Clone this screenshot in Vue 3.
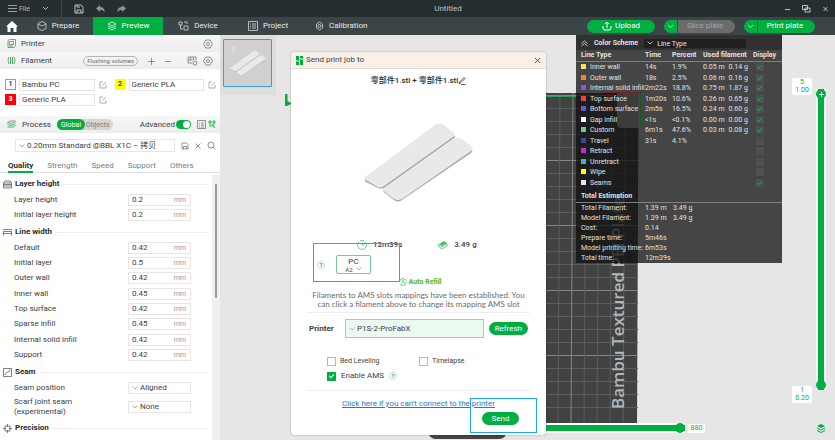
<template>
  <div class="app">
    <header class="titlebar">
      <button class="bar-button file-button">
        <svg width="9" height="9" viewBox="0 0 9 9"><path d="M0 1.500h9M0 4.500h9M0 7.500h9" /></svg>
        File
      </button>
      <button class="bar-button chevron-button" aria-label="More">
        <svg width="7" height="5" viewBox="0 0 7 5"><path d="M1 1l2.500 2.500L6 1" /></svg>
      </button>
      <span class="bar-divider"></span>
      <button class="bar-button" aria-label="Save">
        <svg width="10" height="10" viewBox="0 0 10 10"><path d="M1 1h6l2 2v6H1zM3 9V6h4v3M3 1v2h3" /></svg>
      </button>
      <button class="bar-button muted" aria-label="Undo">
        <svg width="9" height="8" viewBox="0 0 9 8"><path class="solid" d="M4 0v2c3 0 5 2 4.500 5C7.500 5.500 6 5 4 5v2L0 3.500z" /></svg>
      </button>
      <button class="bar-button muted" aria-label="Redo">
        <svg width="9" height="8" viewBox="0 0 9 8"><path class="solid" d="M5 0v2C2 2 0 4 .5 7 1.500 5.500 3 5 5 5v2l4-3.500z" /></svg>
      </button>
      <span class="doc-title">Untitled</span>
      <div class="window-buttons">
        <button class="bar-button" aria-label="Minimize">
          <svg width="7" height="8" viewBox="0 0 7 8"><path d="M1 4.500h5" /></svg>
        </button>
        <button class="bar-button" aria-label="Restore">
          <svg width="9" height="8" viewBox="0 0 9 8"><path d="M.5 .5h5v4h-5zM3 3h5v4H3z" /></svg>
        </button>
        <button class="bar-button" aria-label="Close">
          <svg width="7" height="8" viewBox="0 0 7 8"><path d="M1.500 2l4 4M5.500 2l-4 4" /></svg>
        </button>
      </div>
    </header>

    <nav class="navbar">
      <button class="home" aria-label="Home">
        <svg width="12" height="11" viewBox="0 0 12 11"><path d="M6 0l6 5.500h-1.500V11h-3V7h-3v4h-3V5.500H0z" /></svg>
      </button>
      <button class="nav-tab">
        <svg width="10" height="10" viewBox="0 0 10 10"><path d="M5 .5l4 2v5l-4 2-4-2v-5zM1 3l4 2 4-2" /></svg>
        Prepare
      </button>
      <button class="nav-tab active">
        <svg width="10" height="10" viewBox="0 0 10 10"><path d="M5 1l4 2-4 2-4-2zM1 5l4 2 4-2M1 7l4 2 4-2" /></svg>
        Preview
      </button>
      <button class="nav-tab">
        <svg width="11" height="10" viewBox="0 0 11 10"><path d="M1 1h3v3H1zM2.500 4v4H5M6 5h4v4H6zM6 1h3v2" /></svg>
        Device
      </button>
      <button class="nav-tab">
        <svg width="10" height="10" viewBox="0 0 10 10"><path d="M.5 .5h9v9h-9zM2 3h1M4 3h4M2 5h1M4 5h4M2 7h1M4 7h4" /></svg>
        Project
      </button>
      <button class="nav-tab">
        <svg width="9" height="10" viewBox="0 0 9 10"><path d="M4.500 1l3 2v4l-3 2-3-2V3z" /><circle cx="4.500" cy="5" r="1.500" /></svg>
        Calibration
      </button>
      <div class="nav-actions">
        <button class="pill upload">
          <svg width="10" height="10" viewBox="0 0 10 10"><path d="M5 7V1M3 3l2-2 2 2M1 5v2q0 2 2 2h4q2 0 2-2V5" /></svg>
          Upload
        </button>
        <div class="split">
          <button class="split-arrow" aria-label="Slice options">
            <svg width="7" height="5" viewBox="0 0 7 5"><path d="M1 1l2.500 2.500L6 1" /></svg>
          </button>
          <button class="split-main" disabled>Slice plate</button>
        </div>
        <div class="split">
          <button class="split-arrow" aria-label="Print options">
            <svg width="7" height="5" viewBox="0 0 7 5"><path d="M1 1l2.500 2.500L6 1" /></svg>
          </button>
          <button class="split-main">Print plate</button>
        </div>
      </div>
    </nav>

    <div class="main">
      <aside class="sidebar">
        <div class="panel-bar">
          <svg class="line-icon" width="9" height="9" viewBox="0 0 9 9"><path d="M1 1.500L2.500 .5h6v6L7 8.500H1zM2.500 2.500h4v3h-4z" /><path class="green" d="M2 7h4" /></svg>
          <span class="grow">Printer</span>
          <button class="icon-button" aria-label="Printer settings">
            <svg width="10" height="10" viewBox="0 0 10 10"><path d="M3 1h4l2.500 4L7 9H3L.5 5z" /><circle cx="5" cy="5" r="1.500" /></svg>
          </button>
        </div>
        <div class="panel-bar">
          <svg class="line-icon" width="9" height="9" viewBox="0 0 9 9"><path d="M2 1Q0 4.500 2 8M7 1q2 3.500 0 7" /><path class="green" d="M3.500 1v7M5.500 1v7" /></svg>
          <span class="grow">Filament</span>
          <button class="flushing">Flushing volumes</button>
          <button class="icon-button plus" aria-label="Add filament">
            <svg width="8" height="8" viewBox="0 0 8 8"><path d="M1 4.500h7M4.500 1v7" /></svg>
          </button>
          <button class="icon-button minus" aria-label="Remove filament">
            <svg width="8" height="8" viewBox="0 0 8 8"><path d="M1 4.500h6" /></svg>
          </button>
          <button class="icon-button" aria-label="Sync filaments">
            <svg width="11" height="10" viewBox="0 0 11 10"><path d="M1 1h8v3M1 1v6h4M1 4h5M3.500 1v3M6.500 1v3" /><circle cx="8" cy="7" r="2" /></svg>
          </button>
          <button class="icon-button" aria-label="Filament settings">
            <svg width="10" height="10" viewBox="0 0 10 10"><path d="M3 1h4l2.500 4L7 9H3L.5 5z" /><circle cx="5" cy="5" r="1.500" /></svg>
          </button>
        </div>

        <div class="filaments">
          <div v-for="f in filaments" :key="f.id" class="filament">
            <span class="swatch" :class="f.tone">{{ f.id }}</span>
            <input v-model="f.name" class="filament-name" :aria-label="'Filament ' + f.id" />
            <button class="icon-button edit" :aria-label="'Edit filament ' + f.id">
              <svg width="8" height="8" viewBox="0 0 8 8"><path d="M4 1H1v6h6V4M3.500 4.500L7 1" /></svg>
            </button>
          </div>
        </div>

        <div class="panel-bar process">
          <svg class="line-icon" width="9" height="9" viewBox="0 0 9 9"><path d="M2.500 1h6L6.500 3h-6z" /><path class="green" d="M.5 5h6l2-2M.5 7h6l2-2" /></svg>
          <span>Process</span>
          <div class="scope">
            <button class="on">Global</button>
            <button>Objects</button>
          </div>
          <label class="advanced">
            Advanced
            <input v-model="advanced" type="checkbox" class="toggle" />
          </label>
          <button class="icon-button" aria-label="Parameter list">
            <svg width="9" height="9" viewBox="0 0 9 9"><path d="M.5 .5h8v8h-8zM2 3h1M4 3h3M2 5h1M4 5h3M2 7h1M4 7h3" /></svg>
          </button>
          <button class="icon-button compare" aria-label="Compare presets">
            <svg width="8" height="9" viewBox="0 0 8 9"><path class="green" d="M1 1h2v2H1zM5 1h2v2H5zM2 3v3h4M4 4l3 4M6 3v2" /></svg>
          </button>
        </div>

        <div class="preset">
          <div class="select-box preset-select">
            <svg class="chevron" width="6" height="4" viewBox="0 0 6 4"><path d="M.5 .5L3 3 5.500 .5" /></svg>
            <select aria-label="Process preset"><option>0.20mm Standard @BBL X1C – 拷贝</option></select>
          </div>
          <button class="icon-button" aria-label="Save preset">
            <svg width="8" height="8" viewBox="0 0 8 8"><path d="M1 1h4.500L7 2.500V7H1zM2.500 7V4.500h3V7" /></svg>
          </button>
          <button class="icon-button" aria-label="Delete preset">
            <svg width="8" height="8" viewBox="0 0 8 8"><path d="M1.500 1.500l5 5M6.500 1.500l-5 5" /></svg>
          </button>
          <button class="icon-button" aria-label="Search">
            <svg width="9" height="9" viewBox="0 0 9 9"><circle cx="4" cy="4" r="3" /><path d="M6 6l2.500 2.500" /></svg>
          </button>
        </div>

        <div class="tabs">
          <button v-for="t in tabs" :key="t" :class="{ current: t === currentTab }" @click="currentTab = t">{{ t }}</button>
        </div>

        <div class="settings">
          <div class="settings-list">
            <section v-for="s in sections" :key="s.title">
              <h3>
                <svg class="section-icon" width="9" height="9" viewBox="0 0 9 9"><path :d="s.icon" /></svg>
                {{ s.title }}
              </h3>
              <label v-for="r in s.rows" :key="r.label" class="setting">
                <span class="setting-label">{{ r.label }}</span>
                <span v-if="r.options" class="select-box">
                  <svg class="chevron" width="6" height="4" viewBox="0 0 6 4"><path d="M.5 .5L3 3 5.500 .5" /></svg>
                  <select><option v-for="o in r.options" :key="o">{{ o }}</option></select>
                </span>
                <span v-else class="number-box">
                  <input v-model="r.value" type="text" />
                  <span class="unit">mm</span>
                </span>
              </label>
            </section>
          </div>
          <div class="scrollbar"><span></span></div>
        </div>
      </aside>

      <div class="canvas">
        <svg class="plate" width="93" height="330" viewBox="0 0 93 330">
          <path class="plate-body" d="M0 0h92.500L91 330H0z" />
          <path
            v-for="y in plateRows"
            :key="'r' + y"
            class="plate-line"
            :class="{ strong: (y - 2) % 65 === 0 }"
            :d="`M0 ${y}.5H92`"
          />
          <path
            v-for="x in plateCols"
            :key="'c' + x"
            class="plate-line"
            :class="{ strong: x === 26 }"
            :d="`M${x + 1} 0L${x - 1} 330`"
          />
          <path class="axis-green" d="M0 3.500h30" />
          <text class="plate-text" transform="translate(78 316) rotate(-90)">Bambu Textured PEI Plate</text>
        </svg>
        <svg class="origin" width="6" height="12" viewBox="0 0 6 12"><path d="M0 0h2.500v7L6 9v1l-4 2H0z" /></svg>
        <span class="plate-handle"></span>

        <div class="thumbs">
          <button class="thumb" aria-label="Plate 1">
            <span>1</span>
            <svg width="36" height="27" viewBox="0 0 110 80"><use href="#plates" /></svg>
          </button>
        </div>

        <div class="legend">
          <svg class="legend-axes" width="44" height="48" viewBox="0 0 44 48">
            <path class="area" d="M14 4h24v35H18q-4 0-4-4z" />
            <path class="red" d="M0 3.500h37" />
            <path class="lime" d="M37.500 3v36" />
            <path class="blue" d="M37 4l4-4" />
          </svg>
          <div class="legend-head">
            <svg width="7" height="7" viewBox="0 0 7 7"><path d="M.5 3.500l3-2.500 3 2.500M.5 6l3-2.500 3 2.500" /></svg>
            <strong>Color Scheme</strong>
            <div class="legend-select">
              <svg width="6" height="4" viewBox="0 0 6 4"><path d="M.5 .5L3 3 5.500 .5" /></svg>
              <select aria-label="Color scheme"><option>Line Type</option></select>
            </div>
          </div>
          <table>
            <thead>
              <tr>
                <th class="col-type">Line Type</th>
                <th class="col-time">Time</th>
                <th class="col-percent">Percent</th>
                <th class="col-used">Used filament</th>
                <th class="col-display">Display</th>
              </tr>
            </thead>
            <tbody>
              <tr v-for="l in lines" :key="l.name">
                <td><i :style="{ background: l.color }"></i>{{ l.name }}</td>
                <td>{{ l.time }}</td>
                <td>{{ l.percent }}</td>
                <td><span v-if="l.m" class="used"><span>{{ l.m }}</span><span>{{ l.g }}</span></span></td>
                <td><input v-model="l.shown" type="checkbox" :aria-label="'Display ' + l.name" /></td>
              </tr>
            </tbody>
          </table>
          <h4>Total Estimation</h4>
          <dl>
            <template v-for="t in totals" :key="t[0]">
              <dt>{{ t[0] }}</dt>
              <dd>{{ t[1] }}</dd>
              <dd>{{ t[2] }}</dd>
            </template>
          </dl>
        </div>

        <div class="layer-slider">
          <span class="bubble top">5<br />1.00</span>
          <div class="layer-track">
            <input v-model="topLayer" type="range" min="1" max="5" class="upper" aria-label="Top layer" />
            <input v-model="bottomLayer" type="range" min="1" max="5" aria-label="Bottom layer" />
          </div>
          <span class="bubble bottom">1<br />0.20</span>
        </div>
        <svg class="layers-icon" width="8" height="9" viewBox="0 0 8 9"><path d="M4 0l4 2-4 2-4-2zM0 3.500l4 2 4-2v1l-4 2-4-2zM0 6l4 2 4-2v1L4 9 0 7z" /></svg>

        <div class="move-slider">
          <input v-model="move" type="range" min="0" max="880" aria-label="Move" />
          <span class="bubble">880</span>
        </div>

        <div class="dialog" role="dialog" aria-label="Send print job to">
          <div class="dialog-head">
            <svg width="7" height="9" viewBox="0 0 7 9"><path d="M0 0h3v5L0 4zM4 0h3v3L4 2zM0 5l3 1v3H0zM4 3l3 1v5H4z" /></svg>
            <span>Send print job to</span>
            <button class="icon-button" aria-label="Close dialog">
              <svg width="7" height="7" viewBox="0 0 7 7"><path d="M1 1l5 5M6 1L1 6" /></svg>
            </button>
          </div>

          <div class="job-name">
            零部件1.stl + 零部件1.stl
            <button class="icon-button" aria-label="Rename">
              <svg width="8" height="8" viewBox="0 0 8 8"><path d="M1 7l1-2.500L6 .5 7 1.500 3 5.500zM3 7.500h4.500" /></svg>
            </button>
          </div>

          <svg class="model" width="110" height="80" viewBox="0 0 110 80">
            <g id="plates">
              <path class="side" d="M1 56L71 3q5-3 9 0l9 7q4 4 0 6L20 65q-4 2-8-1L2 59q-2-1-1-3z" />
              <path class="face" d="M1 54L71 2q5-3 9 0l9 7q4 3 0 5L20 63q-4 3-8 0L2 57q-2-1-1-3z" />
              <path class="side" d="M20 66L89 18q5-3 9 0l8 6q4 3 1 6L38 77q-4 3-8 0l-9-7q-3-2-1-4z" />
              <path class="face" d="M20 65L89 17q5-4 9-1l8 6q4 4 1 6L38 76q-4 2-8 0l-9-7q-3-2-1-4z" />
            </g>
          </svg>

          <div class="job-info">
            <span>
              <svg width="10" height="10" viewBox="0 0 10 10"><path d="M2 1.500A4.500 4.500 0 1 0 8 1.500M5 2.500V5h2.500M3 .8A4.500 4.500 0 0 1 7 .8" /></svg>
              12m39s
            </span>
            <span>
              <svg width="10" height="10" viewBox="0 0 10 10"><path class="solid" d="M1 4l5-3 3 2-5 3z" /><path d="M.5 4.500L4 7l5-3.500V6L4 9 .5 6.500z" /></svg>
              3.49 g
            </span>
          </div>

          <div class="slots">
            <span class="help">?</span>
            <button class="slot">
              <span>PC</span>
              <small>
                A2
                <svg width="6" height="4" viewBox="0 0 6 4"><path d="M.5 .5L3 3 5.500 .5" /></svg>
              </small>
            </button>
          </div>

          <div class="refill">
            <svg width="8" height="8" viewBox="0 0 8 8"><circle cx="4" cy="4" r="3.400" stroke-dasharray="9 1.700" /><path d="M2.500 5.500L4 2.500l1.500 3" /></svg>
            Auto Refill
          </div>
          <p class="hint">Filaments to AMS slots mappings have been established. You can click a filament above to change its mapping AMS slot</p>

          <div class="printer-row">
            <label for="printer">Printer</label>
            <div class="select-box printer-select">
              <svg class="chevron" width="6" height="4" viewBox="0 0 6 4"><path d="M.5 .5L3 3 5.500 .5" /></svg>
              <select id="printer"><option>P1S-2-ProFabX</option></select>
            </div>
            <button class="pill">Refresh</button>
          </div>

          <div class="checks">
            <label><input v-model="bedLeveling" type="checkbox" />Bed Leveling</label>
            <label><input v-model="timelapse" type="checkbox" />Timelapse</label>
            <label class="ams"><input v-model="enableAms" type="checkbox" />Enable AMS<span class="help">?</span></label>
          </div>

          <div class="dialog-foot">
            <a href="#">Click here if you can't connect to the printer</a>
            <button class="pill send">Send</button>
          </div>

          <span class="mark mark-slots"></span>
          <span class="mark mark-send"></span>
        </div>
      </div>
    </div>
  </div>
</template>

<script setup>
import { ref } from 'vue';

const filaments = ref([
  { id: 1, name: 'Bambu PC', tone: 'white' },
  { id: 2, name: 'Generic PLA', tone: 'yellow' },
  { id: 3, name: 'Generic PLA', tone: 'red' }
]);

const tabs = ['Quality', 'Strength', 'Speed', 'Support', 'Others'];
const currentTab = ref('Quality');
const advanced = ref(true);

const sections = ref([
  {
    title: 'Layer height',
    icon: 'M2 1h5l1.500 2v5h-8V3zM.5 3h8M.5 4.500h8M.5 6h8',
    rows: [
      { label: 'Layer height', value: '0.2' },
      { label: 'Initial layer height', value: '0.2' }
    ]
  },
  {
    title: 'Line width',
    icon: 'M0 1.500h9M0 3.500h9M.5 4v3.500M8.500 4v3.500M0 5.500h9',
    rows: [
      { label: 'Default', value: '0.42' },
      { label: 'Initial layer', value: '0.5' },
      { label: 'Outer wall', value: '0.42' },
      { label: 'Inner wall', value: '0.45' },
      { label: 'Top surface', value: '0.42' },
      { label: 'Sparse infill', value: '0.45' },
      { label: 'Internal solid infill', value: '0.42' },
      { label: 'Support', value: '0.42' }
    ]
  },
  {
    title: 'Seam',
    icon: 'M.5 .5h8v8h-8zM2 7q1-3 3-3t2-2.500',
    rows: [
      { label: 'Seam position', options: ['Aligned'] },
      { label: 'Scarf joint seam (experimental)', options: ['None'] }
    ]
  },
  {
    title: 'Precision',
    icon: 'M4.500 0v3M4.500 6v3M0 4.500h3M6 4.500h3M2 2h5v5H2z',
    rows: []
  }
]);

const lines = ref([
  { name: 'Inner wall', color: '#fde34b', time: '14s', percent: '1.9%', m: '0.05 m', g: '0.14 g', shown: true },
  { name: 'Outer wall', color: '#ff7d38', time: '18s', percent: '2.5%', m: '0.06 m', g: '0.16 g', shown: true },
  { name: 'Internal solid infill', color: '#9654cc', time: '2m22s', percent: '18.8%', m: '0.75 m', g: '1.87 g', shown: true },
  { name: 'Top surface', color: '#f04040', time: '1m20s', percent: '10.6%', m: '0.26 m', g: '0.65 g', shown: true },
  { name: 'Bottom surface', color: '#665cc7', time: '2m5s', percent: '16.5%', m: '0.24 m', g: '0.60 g', shown: true },
  { name: 'Gap infill', color: '#ffffff', time: '<1s', percent: '<0.1%', m: '0.00 m', g: '0.00 g', shown: true },
  { name: 'Custom', color: '#5ed194', time: '6m1s', percent: '47.6%', m: '0.03 m', g: '0.08 g', shown: true },
  { name: 'Travel', color: '#38489b', time: '31s', percent: '4.1%', shown: false },
  { name: 'Retract', color: '#cd22d6', shown: false },
  { name: 'Unretract', color: '#49adcf', shown: false },
  { name: 'Wipe', color: '#ffff00', shown: false },
  { name: 'Seams', color: '#e6e6e6', shown: true }
]);

const totals = [
  ['Total Filament:', '1.39 m', '3.49 g'],
  ['Model Filament:', '1.39 m', '3.49 g'],
  ['Cost:', '0.14', ''],
  ['Prepare time:', '5m46s', ''],
  ['Model printing time:', '6m53s', ''],
  ['Total time:', '12m39s', '']
];

const plateCols = [13, 26, 39, 52, 65, 78];
const plateRows = Array.from({ length: 25 }, (_, i) => 2 + i * 13);

const topLayer = ref(5);
const bottomLayer = ref(1);
const move = ref(880);
const bedLeveling = ref(false);
const timelapse = ref(false);
const enableAms = ref(true);
</script>

<style>
body {
  margin: 0;
}
</style>

<style scoped>
.app {
  display: flex;
  flex-direction: column;
  height: 100vh;
  overflow: hidden;
  font-family: Roboto, "Noto Sans CJK SC", sans-serif;
  font-size: 8px;
  line-height: 10px;
  color: #3c4043;
  background: #fff;
}

.app *,
.app *::before,
.app *::after {
  box-sizing: border-box;
}

button,
input,
select {
  margin: 0;
  padding: 0;
  border: none;
  border-radius: 0;
  background: none;
  font: inherit;
  color: inherit;
  outline: none;
  appearance: none;
}

button {
  display: flex;
  align-items: center;
  justify-content: center;
  white-space: nowrap;
  cursor: pointer;
}

svg {
  flex: none;
  fill: none;
  stroke: currentColor;
  stroke-width: 0.8;
}

/* title bar */
.titlebar {
  position: relative;
  display: flex;
  align-items: center;
  gap: 12px;
  flex: none;
  height: 17px;
  padding: 0 6px 0 8px;
  background: #262e30;
  color: #d5d8d9;
}

.bar-button {
  color: #e0e3e4;
}

.file-button {
  gap: 2px;
  font-size: 7px;
  color: #b8bdbf;
}

.bar-button.muted {
  color: #8a9193;
}

.solid {
  fill: currentColor;
  stroke: none;
}

.bar-divider {
  width: 1px;
  height: 17px;
  background: #3d4648;
}

.doc-title {
  position: absolute;
  left: 0;
  right: 0;
  margin-left: 61px;
  text-align: center;
  color: #c0c4c5;
  pointer-events: none;
}

.window-buttons {
  display: flex;
  gap: 11px;
  margin-left: auto;
}

/* navigation */
.navbar {
  display: flex;
  flex: none;
  height: 18px;
  background: #3b4446;
  color: #e8eaea;
}

.home {
  width: 23px;
}

.home svg {
  fill: #fff;
  stroke: none;
}

.nav-tab {
  gap: 5px;
  min-width: 70px;
  padding: 0 12px;
}

.nav-tab svg {
  opacity: 0.9;
}

.nav-tab.active {
  background: #00ae42;
  color: #fff;
}

.nav-actions {
  display: flex;
  align-items: center;
  gap: 9px;
  margin-left: auto;
  padding-right: 20px;
  color: #fff;
}

.pill {
  height: 13px;
  padding: 0 6px;
  border-radius: 7px;
  background: #00ae42;
  color: #fff;
}

.upload {
  gap: 3px;
  width: 68px;
}

.upload svg {
  stroke-width: 1;
}

.split {
  display: flex;
  gap: 1px;
  width: 71px;
  height: 13px;
}

.split-arrow {
  width: 13px;
  border-radius: 7px 0 0 7px;
  background: #00ae42;
}

.split-main {
  flex: 1;
  padding-right: 3px;
  border-radius: 0 7px 7px 0;
  background: #00ae42;
}

.split-main:disabled {
  background: #6b6b6b;
  color: #a5a5a5;
}

.main {
  display: flex;
  flex: 1;
  min-height: 0;
}

/* sidebar */
.sidebar {
  display: flex;
  flex-direction: column;
  flex: none;
  width: 220px;
  min-height: 0;
}

.panel-bar {
  display: flex;
  align-items: center;
  gap: 5px;
  flex: none;
  height: 17px;
  padding: 0 7px;
  background: linear-gradient(#f7f7f7, #ededed);
}

.line-icon,
.icon-button {
  color: #75797b;
}

.green {
  stroke: #00ae42;
}

.grow {
  flex: 1;
}

.flushing {
  height: 10px;
  padding: 0 3px;
  border: 1px solid #b5b5b5;
  border-radius: 5px;
  font-size: 6px;
  line-height: 8px;
  color: #6b6b6b;
}

.plus {
  padding: 0 4px;
}

.minus {
  padding-right: 10px;
}

.filaments {
  display: grid;
  grid-template-columns: minmax(0, 1fr) minmax(0, 1fr);
  gap: 4px 8px;
  padding: 10px 4px 11px 5px;
}

.filament {
  display: flex;
  align-items: center;
  height: 11px;
}

.swatch {
  flex: none;
  width: 11px;
  height: 11px;
  font-size: 7px;
  line-height: 11px;
  font-weight: 700;
  text-align: center;
}

.swatch.white {
  border: 1px solid #9a9a9a;
  line-height: 9px;
}

.swatch.yellow {
  background: #ffff00;
}

.swatch.red {
  background: #ff0000;
  color: #fff;
}

.filament-name {
  flex: 1;
  min-width: 0;
  height: 12px;
  margin-left: 3px;
  padding-left: 2px;
  border: 1px solid #e6e6e6;
}

.edit {
  justify-content: flex-end;
  width: 12px;
  color: #9a9a9a;
}

.process {
  gap: 6px;
  padding-right: 4px;
}

.scope {
  display: flex;
  height: 11px;
  border-radius: 6px;
  background: #d6d6d6;
  font-size: 7px;
  color: #7b7b7b;
}

.scope button {
  padding: 0 3px 0 1px;
}

.scope .on {
  padding: 0 4px;
  border-radius: 6px;
  background: #00ae42;
  color: #fff;
}

.advanced {
  display: flex;
  align-items: center;
  gap: 1px;
  margin-left: auto;
}

.toggle {
  width: 15px;
  height: 9px;
  border-radius: 5px;
  background: #b5b5b5;
}

.toggle::after {
  content: "";
  display: block;
  width: 7px;
  height: 7px;
  margin: 1px;
  border-radius: 50%;
  background: #fff;
}

.toggle:checked {
  background: #00ae42;
}

.toggle:checked::after {
  margin-left: 7px;
}

.compare {
  margin-left: -4px;
}

.preset {
  display: flex;
  align-items: center;
  gap: 5px;
  padding: 6px 4px 0 15px;
}

.select-box {
  display: flex;
  align-items: center;
  height: 12px;
  padding-left: 3px;
  border: 1px solid #e6e6e6;
  background: #fff;
}

.chevron {
  color: #9a9a9a;
}

.select-box select {
  flex: 1;
  min-width: 0;
  height: 10px;
  padding-left: 2px;
}

.preset-select {
  flex: 1;
  height: 13px;
  margin-right: 1px;
}

.tabs {
  display: flex;
  gap: 14px;
  flex: none;
  height: 15px;
  margin-top: 6px;
  padding: 0 8px;
  border-bottom: 1px solid #e0e0e0;
  color: #7a7e80;
}

.tabs button {
  height: 15px;
  padding-top: 3px;
  border-bottom: 2px solid transparent;
}

.tabs .current {
  border-bottom-color: #00ae42;
  font-weight: 700;
  color: #262e30;
}

.settings {
  display: flex;
  flex: 1;
  min-height: 0;
  overflow: hidden;
}

.settings-list {
  flex: 1;
  padding: 5px 3px 0 3px;
}

.settings section {
  margin-bottom: 5px;
}

.settings h3 {
  display: flex;
  align-items: center;
  gap: 3px;
  height: 12px;
  margin: 0 0 4px;
  font-size: 8px;
  font-weight: 700;
  color: #262e30;
}

.settings h3::after {
  content: "";
  flex: 1;
  height: 1px;
  background: #eee;
}

.section-icon {
  color: #5c6163;
}

.setting {
  display: flex;
  align-items: center;
  min-height: 12px;
  margin-bottom: 3px;
  padding-left: 11px;
}

.setting:nth-of-type(3n) {
  margin-bottom: 4px;
}

.setting-label {
  width: 114px;
  padding-right: 40px;
  line-height: 10px;
}

.number-box,
.setting .select-box {
  width: 63px;
  height: 12px;
}

.number-box {
  display: flex;
  align-items: center;
  padding: 0 4px 0 3px;
  border: 1px solid #e6e6e6;
}

.number-box input {
  flex: 1;
  width: 30px;
  min-width: 0;
  height: 10px;
}

.unit {
  font-size: 7px;
  color: #9a9a9a;
}

.scrollbar {
  width: 8px;
  margin-top: 2px;
  padding: 9px 3px;
  background: #f0f0f0;
}

.scrollbar span {
  display: block;
  width: 2px;
  height: 114px;
  background: #9a9a9a;
}

/* canvas */
.canvas {
  position: relative;
  flex: 1;
  min-width: 0;
  background: #e6e6e6;
  overflow: hidden;
}

.plate {
  position: absolute;
  left: 326px;
  top: 58px;
  stroke-width: 1;
}

.plate-body {
  fill: #414342;
  stroke: none;
}

.plate-line {
  stroke: #5c5e5d;
}

.plate-line.strong {
  stroke: #858786;
}

.axis-green {
  stroke: #2f9e63;
}

.plate-text {
  fill: #b4b6b5;
  stroke: none;
  font-family: "Open Sans", sans-serif;
  font-size: 17px;
  font-weight: 600;
}

.origin {
  position: absolute;
  left: 65px;
  top: 59px;
  fill: #00ae42;
  stroke: none;
}

.plate-handle {
  position: absolute;
  left: 208px;
  top: 395px;
  width: 79px;
  height: 9px;
  border-radius: 0 0 8px 8px;
  background: #444;
}

.thumbs {
  width: 56px;
  padding: 4px 4px 8px 3px;
  background: #dedede;
}

.thumb {
  position: relative;
  width: 49px;
  height: 48px;
  border: 1px solid #3b9be8;
  border-radius: 1px;
  background: #d0d0d0;
}

.thumb span {
  position: absolute;
  left: 7px;
  top: 5px;
  color: #f4f4f4;
}

.side {
  fill: #a9a9a9;
  stroke: none;
}

.face {
  fill: #e9e9e9;
  stroke: none;
}

/* legend */
.legend {
  position: absolute;
  top: 0;
  right: 53px;
  width: 206px;
  background: rgba(15, 15, 15, 0.75);
  color: #e2e2e2;
  font-size: 7px;
}

.legend-axes {
  position: absolute;
  left: 27px;
  top: 54px;
  stroke-width: 1;
}

.area {
  fill: #4a4a4a;
  stroke: none;
  opacity: 0.7;
}

.red {
  stroke: #7d1f24;
}

.lime {
  stroke: #155c1e;
}

.blue {
  stroke: #20235f;
}

.legend-head {
  position: relative;
  display: flex;
  align-items: center;
  gap: 6px;
  height: 15px;
  padding: 1px 36px 0 5px;
  background: rgba(20, 20, 20, 0.4);
}

.legend-select {
  display: flex;
  align-items: center;
  flex: 1;
  height: 9px;
  padding-left: 3px;
  background: #202020;
}

.legend-select select {
  flex: 1;
  height: 9px;
  padding-left: 4px;
}

.legend table {
  position: relative;
  width: 100%;
  border-collapse: collapse;
  table-layout: fixed;
}

.legend th {
  height: 11px;
  padding: 0;
  border-bottom: 1px solid #808080;
  text-align: left;
  white-space: nowrap;
  line-height: 10px;
  font-weight: 700;
}

.legend td {
  padding: 0;
  line-height: 10px;
  white-space: nowrap;
}

.legend tbody tr:nth-child(odd) td {
  padding-bottom: 1px;
}

.legend th:first-child,
.legend td:first-child {
  padding-left: 5px;
}

.col-type {
  width: 69px;
}

.col-time {
  width: 27px;
}

.col-percent {
  width: 31px;
}

.col-used {
  width: 50px;
}

.legend i {
  display: inline-block;
  width: 5px;
  height: 5px;
  margin-right: 4px;
}

.used {
  display: flex;
  gap: 4px;
}

.legend td input {
  display: block;
  width: 8px;
  height: 8px;
  margin-left: 3px;
  background: #505050;
}

.legend td input:checked::after,
.checks input:checked::after {
  content: "";
  display: block;
  width: 5px;
  height: 3px;
  margin: 2px 0 0 1px;
  border: solid #00ae42;
  border-width: 0 0 1px 1px;
  transform: rotate(-45deg);
}

.legend h4 {
  height: 12px;
  margin: 3px 0 0;
  padding-left: 5px;
  border-bottom: 1px solid #808080;
  font-size: 7px;
  line-height: 10px;
}

.legend dl {
  display: grid;
  grid-template-columns: 64px 28px 1fr;
  margin: 0;
  padding-left: 5px;
  line-height: 10px;
}

.legend dt,
.legend dd {
  margin: 0;
  height: 10px;
  white-space: nowrap;
}

/* sliders */
.layer-slider {
  position: absolute;
  top: 43px;
  right: 8px;
  bottom: 37px;
  display: flex;
  gap: 3px;
}

.bubble {
  width: 20px;
  height: 17px;
  border-radius: 2px;
  background: #fff;
  color: #00ae42;
  font-size: 7px;
  line-height: 8px;
  text-align: center;
}

.layer-track {
  order: 1;
  display: grid;
  width: 12px;
  margin: 11px 0 13px;
  background: linear-gradient(90deg, transparent 1px, #fff 1px 3px, #00ae42 3px 9px, #fff 9px 11px, transparent 11px);
}

.layer-slider .bottom {
  align-self: flex-end;
  margin-left: -23px;
}

.layer-track input {
  grid-area: 1 / 1;
  width: 12px;
  height: 100%;
  writing-mode: vertical-lr;
  direction: rtl;
  pointer-events: none;
}

input[type="range"]::-webkit-slider-thumb {
  width: 10px;
  height: 10px;
  border-radius: 50%;
  background: #00ae42;
  appearance: none;
  pointer-events: auto;
}

.upper::-webkit-slider-thumb {
  background:
    linear-gradient(#fff, #fff) center / 5px 1px no-repeat,
    linear-gradient(#fff, #fff) center / 1px 5px no-repeat,
    #00ae42 !important;
}

.layers-icon {
  position: absolute;
  right: 10px;
  bottom: 7px;
  fill: #00ae42;
  stroke: none;
}

.move-slider {
  position: absolute;
  left: 80px;
  right: 130px;
  bottom: 7px;
  display: flex;
  align-items: center;
  gap: 3px;
}

.move-slider input {
  flex: 1;
  height: 10px;
  background: linear-gradient(#fff 2px, #00ae42 2px 8px, #fff 8px);
}

.move-slider .bubble {
  width: 17px;
  height: 9px;
}

/* send dialog */
.dialog {
  position: absolute;
  left: 71px;
  top: 17px;
  width: 255px;
  padding-bottom: 10px;
  border-radius: 4px;
  background: #fff;
  box-shadow: 0 0 2px rgba(0, 0, 0, 0.35);
}

.dialog-head {
  display: flex;
  align-items: center;
  gap: 3px;
  height: 17px;
  padding: 0 5px;
  border-bottom: 1px solid #e3ddd6;
  border-radius: 4px 4px 0 0;
  background: #f9f1e8;
}

.dialog-head > svg {
  fill: #00ae42;
  stroke: none;
}

.dialog-head button {
  margin-left: auto;
  color: #333;
}

.job-name {
  display: flex;
  align-items: center;
  justify-content: center;
  height: 10px;
  margin-top: 7px;
  font-weight: 500;
  color: #262e30;
}

.job-name .icon-button {
  color: #262e30;
}

.model {
  display: block;
  margin: 37px auto 0;
}

.job-info {
  display: flex;
  gap: 36px;
  margin: 37px 0 0 66px;
  font-weight: 500;
}

.job-info span {
  display: flex;
  align-items: center;
  gap: 6px;
}

.job-info svg,
.refill svg {
  color: #45c074;
}

.slots {
  display: flex;
  align-items: center;
  gap: 11px;
  height: 19px;
  margin: 5px 0 0 26px;
}

.help {
  display: block;
  width: 8px;
  height: 8px;
  border: 1px solid #cfd8d2;
  border-radius: 50%;
  font-size: 6px;
  line-height: 6px;
  font-weight: 700;
  text-align: center;
  color: #00ae42;
}

.slot {
  flex-direction: column;
  width: 35px;
  height: 19px;
  border: 1px solid #6fce93;
  border-radius: 2px;
  line-height: 9px;
}

.slot small {
  display: flex;
  align-items: center;
  gap: 3px;
  font-size: 6px;
  line-height: 7px;
}

.slot svg {
  color: #9a9a9a;
}

.refill {
  display: flex;
  align-items: center;
  justify-content: center;
  gap: 2px;
  margin-top: 3px;
  padding-left: 3px;
  font-size: 7px;
  font-weight: 700;
  color: #4fb81c;
}

.hint {
  margin: 4px 16px 0;
  padding: 0 1px 3px;
  border-bottom: 1px solid #eee;
  font-family: Lato, sans-serif;
  line-height: 9px;
  text-align: center;
  color: #6b6b6b;
}

.printer-row {
  display: flex;
  align-items: center;
  gap: 5px;
  margin: 6px 18px 0;
}

.printer-row label {
  width: 31px;
  font-weight: 700;
}

.printer-select {
  flex: 1;
  height: 19px;
  border-color: #8fd8a8;
  background: #ecf9f0;
}

.checks {
  display: grid;
  grid-template-columns: 92px 1fr;
  gap: 5px 0;
  margin: 18px 16px 0;
  padding: 0 0 9px 20px;
  border-bottom: 1px solid #eee;
  font-size: 7px;
}

.checks label {
  display: flex;
  align-items: center;
  gap: 4px;
}

.checks .ams {
  gap: 5px;
  font-size: 8px;
}

.checks input {
  width: 9px;
  height: 9px;
  border: 1px solid #b8b8b8;
}

.checks input:checked {
  border-color: #00ae42;
  background: #00ae42;
}

.checks input:checked::after {
  margin-top: 1px;
  border-color: #fff;
}

.dialog-foot {
  display: flex;
  flex-direction: column;
  align-items: center;
  gap: 3px;
  margin-top: 8px;
}

.dialog-foot a {
  color: #1f78d1;
}

.send {
  width: 37px;
  align-self: flex-end;
  margin-right: 27px;
}

.mark {
  position: absolute;
  border: 1px solid #22a7e8;
  pointer-events: none;
}

.mark-slots {
  left: 22px;
  top: 191px;
  width: 87px;
  height: 39px;
}

.mark-send {
  right: 9px;
  bottom: 2px;
  width: 67px;
  height: 35px;
}
</style>
